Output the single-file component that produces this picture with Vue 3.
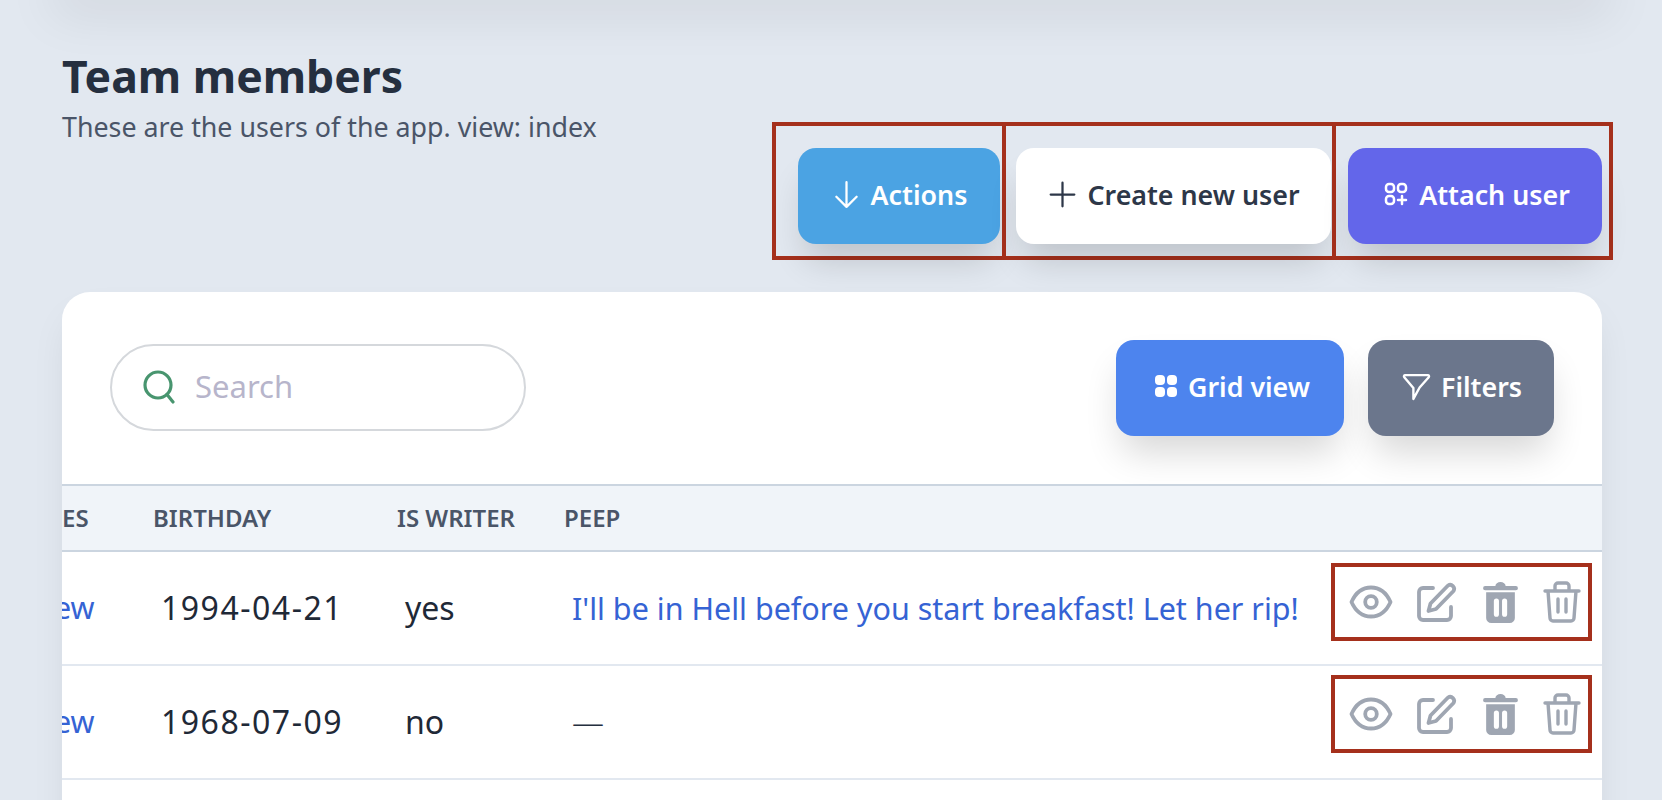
<script setup>
const rows = [
  { tail: 'ew', date: '1994-04-21', writer: 'yes', peep: "I'll be in Hell before you start breakfast! Let her rip!", shift: 'near' },
  { tail: 'ew', date: '1968-07-09', writer: 'no', peep: '', shift: 'far' },
]
</script>

<template>
  <div class="page">
    <div class="top-panel"></div>
    <header class="head">
      <div class="intro">
        <h1>Team members</h1>
        <p>These are the users of the app. view: index</p>
      </div>
      <div class="actions">
        <div class="mark first">
          <button class="btn sky">
            <svg class="ico" viewBox="0 0 24 24" fill="none" stroke="currentColor" stroke-width="2" stroke-linecap="round" stroke-linejoin="round"><path d="M12 1v22M3 14l9 9 9-9"/></svg>
            Actions
          </button>
        </div>
        <div class="mark second">
          <button class="btn white">
            <svg class="ico" viewBox="0 0 24 24" fill="none" stroke="currentColor" stroke-width="2" stroke-linecap="round"><path d="M12 1.500v21M1.500 12h21"/></svg>
            Create new user
          </button>
        </div>
        <div class="mark third">
          <button class="btn indigo">
            <svg class="ico small" viewBox="0 0 24 24" fill="none" stroke="currentColor" stroke-width="2.500" stroke-linecap="round"><rect x="2" y="2" width="8" height="8" rx="3"/><rect x="14" y="2" width="8" height="8" rx="3"/><rect x="2" y="14" width="8" height="8" rx="3"/><path d="M18 14v8M14 18h8"/></svg>
            Attach user
          </button>
        </div>
      </div>
    </header>

    <section class="card">
      <div class="toolbar">
        <label class="search">
          <svg class="search-ico" viewBox="0 0 34 34" fill="none" stroke="#48956f" stroke-width="3.200" stroke-linecap="round"><circle cx="16" cy="15" r="13"/><path d="M25 24.500l6 7.500"/></svg>
          <span>Search</span>
        </label>
        <div class="tools">
          <button class="btn tool blue">
            <svg class="ico grid" viewBox="0 0 24 24" fill="currentColor"><rect x="1" y="1" width="10" height="10" rx="4"/><rect x="13" y="1" width="10" height="10" rx="4"/><rect x="1" y="13" width="10" height="10" rx="4"/><rect x="13" y="13" width="10" height="10" rx="4"/></svg>
            Grid view
          </button>
          <button class="btn tool slate">
            <svg class="ico filter" viewBox="0 0 28 28" fill="none" stroke="currentColor" stroke-width="2.300" stroke-linecap="round" stroke-linejoin="round"><path d="M3 3h22c1 0 1.500 1.200.8 2L17 15l-6 11V15.500L2.200 5C1.500 4.200 2 3 3 3z"/></svg>
            Filters
          </button>
        </div>
      </div>

      <div class="row th">
        <div class="c-a">ES</div>
        <div class="c-b">BIRTHDAY</div>
        <div class="c-c">IS WRITER</div>
        <div class="c-d">PEEP</div>
      </div>

      <div v-for="r in rows" :key="r.date" class="row td">
        <div class="c-a link tail">{{ r.tail }}</div>
        <div class="c-b date">{{ r.date }}</div>
        <div class="c-c">{{ r.writer }}</div>
        <div class="c-d">
          <span v-if="r.peep" class="link">{{ r.peep }}</span>
          <span v-else class="dash">—</span>
        </div>
        <div class="c-e" :class="r.shift">
          <svg class="act eye" viewBox="0 0 44 34" fill="none" stroke="currentColor" stroke-width="3.800" stroke-linecap="round" stroke-linejoin="round"><path d="M2.500 17C6.500 8 13.500 2.500 22 2.500S37.500 8 41.500 17C37.500 26 30.500 31.500 22 31.500S6.500 26 2.500 17z"/><circle cx="22" cy="17" r="5.800"/></svg>
          <svg class="act pencil" viewBox="0 0 40 40" fill="none" stroke="currentColor" stroke-width="3.800" stroke-linecap="round" stroke-linejoin="round"><path d="M16 6H6a4 4 0 0 0-4 4v24a4 4 0 0 0 4 4h24a4 4 0 0 0 4-4v-9"/><path d="M31 3.500a4 4 0 0 1 5.500 5.500L19 27l-7.500 2 2-7.500z"/></svg>
          <svg class="act trash" viewBox="0 0 36 40" fill="currentColor"><path fill-rule="evenodd" d="M13 4a5 4 0 0 1 10 0h10a2 2 0 0 1 0 4H3a2 2 0 0 1 0-4zM4 10h28v25a5 5 0 0 1-5 5H9a5 5 0 0 1-5-5zm10 6a2.500 2.500 0 0 0-2.500 2.500v13a2.500 2.500 0 0 0 5 0v-13A2.500 2.500 0 0 0 14 16zm8 0a2.500 2.500 0 0 0-2.500 2.500v13a2.500 2.500 0 0 0 5 0v-13A2.500 2.500 0 0 0 22 16z"/></svg>
          <svg class="act bin" viewBox="0 0 38 42" fill="none" stroke="currentColor" stroke-width="3.400" stroke-linecap="round" stroke-linejoin="round"><path d="M2 10h34M12 10V5a3 3 0 0 1 3-3h8a3 3 0 0 1 3 3v5M5 10l2 27a3 3 0 0 0 3 3h18a3 3 0 0 0 3-3l2-27M15 18v13M23 18v13"/></svg>
        </div>
      </div>
      <div class="row td"></div>
    </section>
  </div>
</template>

<style>
html, body { margin: 0; height: 800px; overflow: hidden; background: #e2e8f0; }
</style>

<style scoped>
.page {
  height: 800px;
  overflow: hidden;
  box-sizing: border-box;
  padding: 0 60px 0 62px;
  background: #e2e8f0;
  color: #1f2937;
  font-family: "Noto Sans", "Open Sans", sans-serif;
}
.top-panel {
  height: 0;
  margin: 0 10px;
  box-shadow: 0 -5px 50px 20px rgba(0, 0, 0, .08);
}
.head { display: flex; justify-content: space-between; align-items: flex-start; padding-top: 45px; }
.intro h1 { margin: 0; font-size: 44.500px; line-height: 62px; font-weight: 700; color: #252f3f; }
.intro p { margin: 0; padding-top: 1px; font-size: 26.800px; line-height: 38px; color: #4a5568; }
.actions { display: flex; margin: 77px -11px 0 0; }
.mark { border: 4px solid #a5301c; height: 138px; box-sizing: border-box; padding-top: 22px; }
.first { padding-left: 22px; padding-right: 2px; }
.second { margin-left: -4px; padding-left: 10px; padding-right: 1px; }
.third { margin-left: -4px; padding-left: 12px; padding-right: 7px; }
.btn {
  display: inline-flex;
  align-items: center;
  justify-content: center;
  gap: 11px;
  height: 96px;
  border: 0;
  border-radius: 18px;
  font: 600 26.800px "Noto Sans", sans-serif;
  box-shadow: 0 24px 34px -8px rgba(0, 0, 0, .16);
  padding: 0 0 4px 2px;
}
.sky { width: 202px; background: #4ba3e3; color: #fff; }
.white { width: 315px; background: #fff; color: #2d3748; }
.indigo { width: 254px; padding-left: 4px; background: #6366ea; color: #fff; }
.ico { width: 27px; height: 27px; flex: none; }
.ico.small { width: 24px; height: 24px; }
.card {
  margin-top: 32px;
  height: 700px;
  background: #fff;
  border-radius: 28px;
  overflow: hidden;
  box-shadow: 0 20px 40px -10px rgba(0, 0, 0, .1);
}
.toolbar { display: flex; justify-content: space-between; align-items: center; height: 192px; padding: 0 48px 2px; box-sizing: border-box; }
.search {
  width: 416px;
  height: 87px;
  box-sizing: border-box;
  border: 2px solid #d5d8dc;
  border-radius: 44px;
  display: flex;
  align-items: center;
  gap: 19px;
  padding-left: 30px;
  font-size: 31px;
  color: #b7b5cb;
}
.search span { margin-top: -3px; }
.search-ico { width: 34px; height: 34px; }
.tools { display: flex; gap: 24px; margin: 2px 0 0 1px; }
.tool { height: 96px; gap: 10px; box-shadow: 0 22px 36px -6px rgba(0, 0, 0, .16); }
.blue { width: 228px; padding-left: 4px; background: #4d84ee; color: #fff; }
.slate { width: 186px; background: #6b768c; color: #fff; }
.ico.grid { width: 24px; height: 24px; }
.ico.filter { width: 29px; height: 29px; }
.row { display: flex; align-items: center; box-sizing: border-box; white-space: nowrap; }
.th {
  height: 68px;
  padding-bottom: 2px;
  background: #f0f4f9;
  border-top: 2px solid #cbd5e0;
  border-bottom: 2px solid #cbd5e0;
  font-size: 24px;
  font-weight: 600;
  color: #4a5568;
}
.td { height: 114px; border-bottom: 2px solid #e2e8f0; font-size: 32px; color: #1f2937; }
.td .c-a, .td .c-b, .td .c-c, .td .c-d { margin-top: -2px; }
.c-a { width: 75px; flex: none; overflow: hidden; }
.c-b { width: 244px; flex: none; padding-left: 16px; box-sizing: border-box; }
.c-c { width: 167px; flex: none; padding-left: 16px; box-sizing: border-box; }
.c-d { width: 783px; flex: none; padding-left: 16px; box-sizing: border-box; }
.td .c-b, .td .c-c, .td .c-d { padding-left: 24px; }
.date { letter-spacing: 1.500px; }
.c-e {
  width: 261px;
  height: 78px;
  flex: none;
  box-sizing: border-box;
  border: 4px solid #a5301c;
  display: flex;
  align-items: center;
  justify-content: space-between;
  padding: 0 7px 0 14px;
  color: #9fa6b2;
}
.near { margin-bottom: 12px; }
.far { margin-bottom: 16px; }
.link { color: #3563d4; font-size: 30.500px; }
.tail { text-indent: -8px; }
.dash { display: inline-block; font-weight: 300; color: #252f3f; }
.act { flex: none; }
.eye { width: 44px; height: 34px; }
.pencil { width: 40px; height: 40px; }
.trash { width: 37px; height: 41px; }
.bin { width: 38px; height: 42px; }
</style>
